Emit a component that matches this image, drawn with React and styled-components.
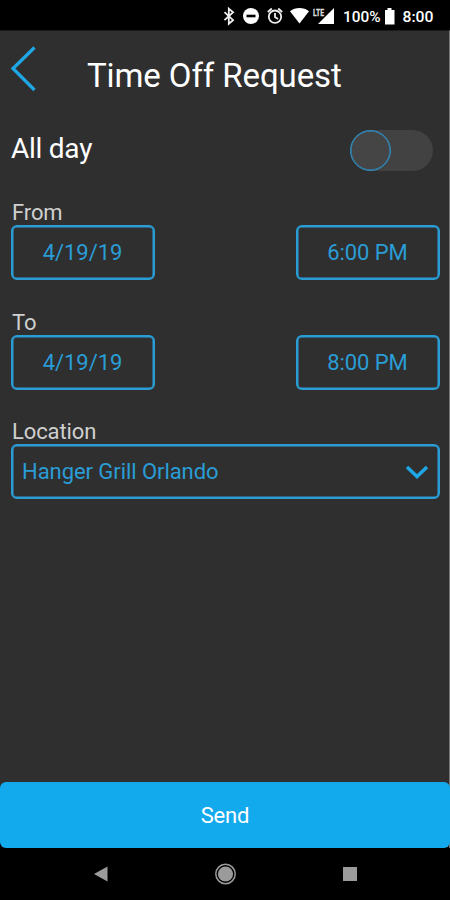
import React, { useState } from 'react';
import styled, { createGlobalStyle } from 'styled-components';

const colors = {
  background: '#2f2f2f',
  blue: '#2a9dd6',
  brightBlue: '#13a9ed',
  label: '#cfcfcf',
  white: '#ffffff',
  nav: '#9b9b9b'
};

const GlobalStyle = createGlobalStyle`
  * {
    box-sizing: border-box;
  }

  body {
    margin: 0;
    background: #000;
    font-family: Roboto, sans-serif;
  }

  button {
    font-family: inherit;
    cursor: pointer;
  }
`;

const StyledPhone = styled.div`
  display: flex;
  flex-direction: column;
  width: 450px;
  height: 900px;
  overflow: hidden;
  background: #000;
`;

const StyledStatusBar = styled.div`
  flex: none;
  height: 30px;
  padding-top: 2px;
  background: #000;
  color: ${colors.white};

  svg {
    display: block;
  }
`;

const StyledScreen = styled.main`
  flex: none;
  display: flex;
  flex-direction: column;
  height: 818px;
  background: linear-gradient(${colors.background} 752px, #000 814px);
  border-top: 1px solid #1c1a1c;
  border-right: 1px solid #757575;
`;

const StyledHeader = styled.header`
  display: flex;
  height: 92px;
  padding: 15px 0 0 10px;
`;

const StyledBack = styled.button`
  width: 28px;
  height: 46px;
  padding: 0;
  border: 0;
  background: transparent;

  svg {
    display: block;
  }
`;

const StyledTitle = styled.h1`
  margin: 10px 0 0 49px;
  color: ${colors.white};
  font-size: 33px;
  font-weight: 400;
  line-height: 40px;
  letter-spacing: -0.1px;
  white-space: nowrap;
`;

const StyledToggleRow = styled.div`
  display: flex;
  justify-content: space-between;
  height: 78px;
  padding: 7px 16px 0 11px;
`;

const StyledToggleLabel = styled.span`
  padding-top: 1px;
  color: ${colors.white};
  font-size: 28px;
  line-height: 36px;
  letter-spacing: -0.25px;
`;

const StyledSwitch = styled.button`
  display: flex;
  justify-content: ${({ $on }) => ($on ? 'flex-end' : 'flex-start')};
  width: 83px;
  height: 41px;
  padding: 0;
  border: 0;
  border-radius: 21px;
  background: #424242;
`;

const StyledKnob = styled.span`
  width: 41px;
  height: 41px;
  border: 1px solid #2d8fc4;
  box-shadow: inset 0 0 0 0.5px #2d8fc4;
  border-radius: 50%;
  background: #454545;
`;

const StyledField = styled.section`
  height: 109.5px;
  padding: 0 9px 0 11px;
`;

const StyledLabel = styled.div`
  height: 24px;
  padding-left: 1px;
  color: ${colors.label};
  font-size: 22px;
  line-height: 24px;
  letter-spacing: -0.1px;
`;

const StyledPair = styled.div`
  display: flex;
  justify-content: space-between;
`;

const StyledPicker = styled.button`
  width: ${({ $wide }) => ($wide ? '100%' : '144px')};
  height: 55px;
  display: flex;
  align-items: center;
  justify-content: ${({ $wide }) => ($wide ? 'space-between' : 'center')};
  padding: ${({ $wide }) => ($wide ? '0 9px 0 9px' : '1px 1px 0 0')};
  border: 2px solid ${colors.blue};
  box-shadow: inset 0 0 0 0.5px ${colors.blue};
  border-radius: 6px;
  background: transparent;
  color: ${colors.blue};
  font-size: 22px;
  line-height: 26px;
  letter-spacing: -0.06px;
  white-space: nowrap;
`;

const StyledSend = styled.button`
  flex: none;
  width: 450px;
  height: 66px;
  margin-top: auto;
  padding: 0;
  border: 0;
  border-radius: 6px;
  background: ${colors.brightBlue};
  color: ${colors.white};
  font-size: 22px;
  letter-spacing: -0.2px;
`;

const StyledNavBar = styled.nav`
  flex: none;
  height: 52px;
`;

const StatusIcons = () => (
  <svg width="450" height="28" viewBox="0 2 450 28" fill="#fff">
    <path d="M224.5 12.2l8.6 8-4.3 3.600V8.600l4.300 3.600-8.600 8" fill="none" stroke="#eee" strokeWidth="1.800" />
    <circle cx="251" cy="16" r="8" />
    <rect x="246.5" y="14.7" width="9" height="2.6" fill="#000" />
    <g fill="none" stroke="#eee" strokeWidth="1.8">
      <circle cx="275" cy="16.7" r="6.2" />
      <path d="M275 13v4l3 2M267.800 12l4-3.500M282.200 12l-4-3.500" />
    </g>
    <path d="M290 11.200C295.500 7 303.500 7 309 11.200L299.500 23.500z" />
    <path d="M334 8v16h-16z" />
    <rect x="312" y="7" width="12.500" height="9.500" fill="#000" />
    <text x="313" y="15.500" fontSize="9.500" fontWeight="700" textLength="11" lengthAdjust="spacingAndGlyphs" fill="#ddd" stroke="#ddd" strokeWidth=".3">LTE</text>
    <text x="343" y="22" fontSize="15.500" fontWeight="500" textLength="37.500" lengthAdjust="spacingAndGlyphs">100%</text>
    <path d="M387.500 8h4v2h3v14.500h-9.500V10h2.500z" />
    <text x="402.500" y="22" fontSize="15.500" fontWeight="500" textLength="31" lengthAdjust="spacingAndGlyphs">8:00</text>
  </svg>
);

const App = () => {
  const [allDay, setAllDay] = useState(false);

  return (
    <StyledPhone>
      <GlobalStyle />
      <StyledStatusBar>
        <StatusIcons />
      </StyledStatusBar>
      <StyledScreen>
        <StyledHeader>
          <StyledBack aria-label="Back">
            <svg width="28" height="46" fill="none" stroke="#1ea6e5" strokeWidth="3.300">
              <path d="M24.500 1.500L3 22.500 24.500 44" />
            </svg>
          </StyledBack>
          <StyledTitle>Time Off Request</StyledTitle>
        </StyledHeader>
        <StyledToggleRow>
          <StyledToggleLabel>All day</StyledToggleLabel>
          <StyledSwitch
            $on={allDay}
            role="switch"
            aria-checked={allDay}
            aria-label="All day"
            onClick={() => setAllDay(!allDay)}
          >
            <StyledKnob />
          </StyledSwitch>
        </StyledToggleRow>
        <StyledField>
          <StyledLabel>From</StyledLabel>
          <StyledPair>
            <StyledPicker>4/19/19</StyledPicker>
            <StyledPicker>6:00 PM</StyledPicker>
          </StyledPair>
        </StyledField>
        <StyledField>
          <StyledLabel>To</StyledLabel>
          <StyledPair>
            <StyledPicker>4/19/19</StyledPicker>
            <StyledPicker>8:00 PM</StyledPicker>
          </StyledPair>
        </StyledField>
        <StyledField>
          <StyledLabel>Location</StyledLabel>
          <StyledPicker $wide>
            Hanger Grill Orlando
            <svg width="24" height="16" fill="none" stroke="#1ea6e5" strokeWidth="3.500">
              <path d="M2 3l10 9.500L22 3" />
            </svg>
          </StyledPicker>
        </StyledField>
        <StyledSend>Send</StyledSend>
      </StyledScreen>
      <StyledNavBar>
        <svg width="450" height="52" fill={colors.nav}>
          <path d="M94 26l13.500-7.500v15z" />
          <circle cx="225.500" cy="26" r="7.600" />
          <circle cx="225.500" cy="26" r="9.700" fill="none" stroke={colors.nav} strokeWidth="1.500" />
          <rect x="343" y="19" width="14" height="14" />
        </svg>
      </StyledNavBar>
    </StyledPhone>
  );
};

export default App;
